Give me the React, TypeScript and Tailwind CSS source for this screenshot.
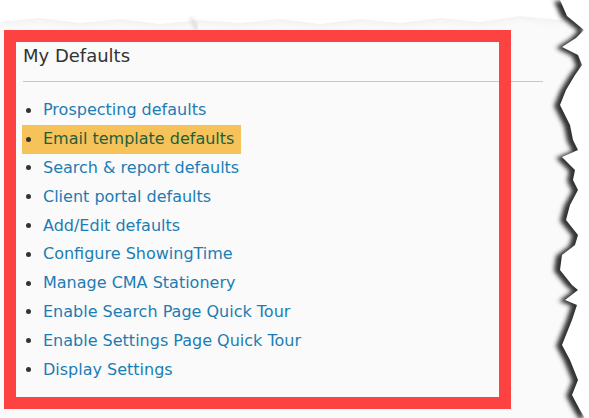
import React from "react";

const items = [
  "Prospecting defaults",
  "Email template defaults",
  "Search & report defaults",
  "Client portal defaults",
  "Add/Edit defaults",
  "Configure ShowingTime",
  "Manage CMA Stationery",
  "Enable Search Page Quick Tour",
  "Enable Settings Page Quick Tour",
  "Display Settings",
];

const rightEdge: [number, number][] = [
  [567, 16], [584, 30], [576, 38], [562, 47], [578, 55], [582, 65], [575, 75],
  [566, 90], [560, 105], [565, 115], [570, 125], [573, 140], [578, 150],
  [562, 157], [575, 170], [573, 180], [578, 190], [570, 205], [566, 220],
  [578, 235], [575, 245], [562, 255], [560, 270], [572, 285], [578, 290],
  [565, 300], [577, 305], [572, 320], [562, 345], [570, 360], [578, 380],
  [572, 395], [580, 410], [585, 418],
];

function TornEdges() {
  const pts = rightEdge.map(([x, y]) => `${x},${y}`).join(" ");
  const right = `${pts} 589,418 589,0 560,0`;
  const top =
    "0,0 589,0 589,14 560,20 520,16 480,22 440,18 400,23 360,19 320,24 280,19 240,23 200,20 160,24 120,19 80,23 40,18 0,22";
  return (
    <svg className="absolute inset-0" width="589" height="418" viewBox="0 0 589 418">
      <defs>
        <filter id="blur" x="-20%" y="-20%" width="140%" height="140%">
          <feGaussianBlur stdDeviation="2" />
        </filter>
        <filter id="blur2" x="-20%" y="-20%" width="140%" height="140%">
          <feGaussianBlur stdDeviation="3" />
        </filter>
      </defs>
      <polygon points={top} fill="#f1f1f1" transform="translate(0,3)" filter="url(#blur2)" />
      <polygon points={top} fill="#ffffff" />
      <path d="M190,18 Q197,24 196,31" stroke="#b0b0b0" strokeWidth="1.5" fill="none" filter="url(#blur)" />
      <polygon points={right} fill="#333333" transform="translate(-6,1)" filter="url(#blur)" />
      <polygon points={right} fill="#ffffff" />
    </svg>
  );
}

export default function App() {
  return (
    <div className="relative w-[589px] h-[418px] overflow-hidden bg-[#fafafa]" style={{ fontFamily: "'DejaVu Sans', Verdana, sans-serif" }}>
      <div className="w-[543px] pl-[23px] pt-[44px]">
        <h2 className="text-[18px] leading-[24px] text-[#333333] font-normal">My Defaults</h2>
        <div className="mt-[13px] h-px bg-[#c8c8c8]" />
        <ul className="mt-[14px] flex flex-col">
          {items.map((t, i) => {
            const hl = i === 1;
            return (
              <li
                key={t}
                className={`-ml-[1px] flex w-fit items-center h-[28.8px] pl-[4px] pr-[7px] text-[16px] ${hl ? "bg-[#f5c35a] text-[#1f5e3c]" : "text-[#1b7db4]"}`}
              >
                <span className="mr-[12px] h-[5px] w-[5px] rounded-full bg-[#333333]" />
                <span>{t}</span>
              </li>
            );
          })}
        </ul>
      </div>
      <TornEdges />
      <div className="absolute left-[4px] top-[30px] h-[379px] w-[507px] border-[12px] border-[#fd4242]" />
    </div>
  );
}
